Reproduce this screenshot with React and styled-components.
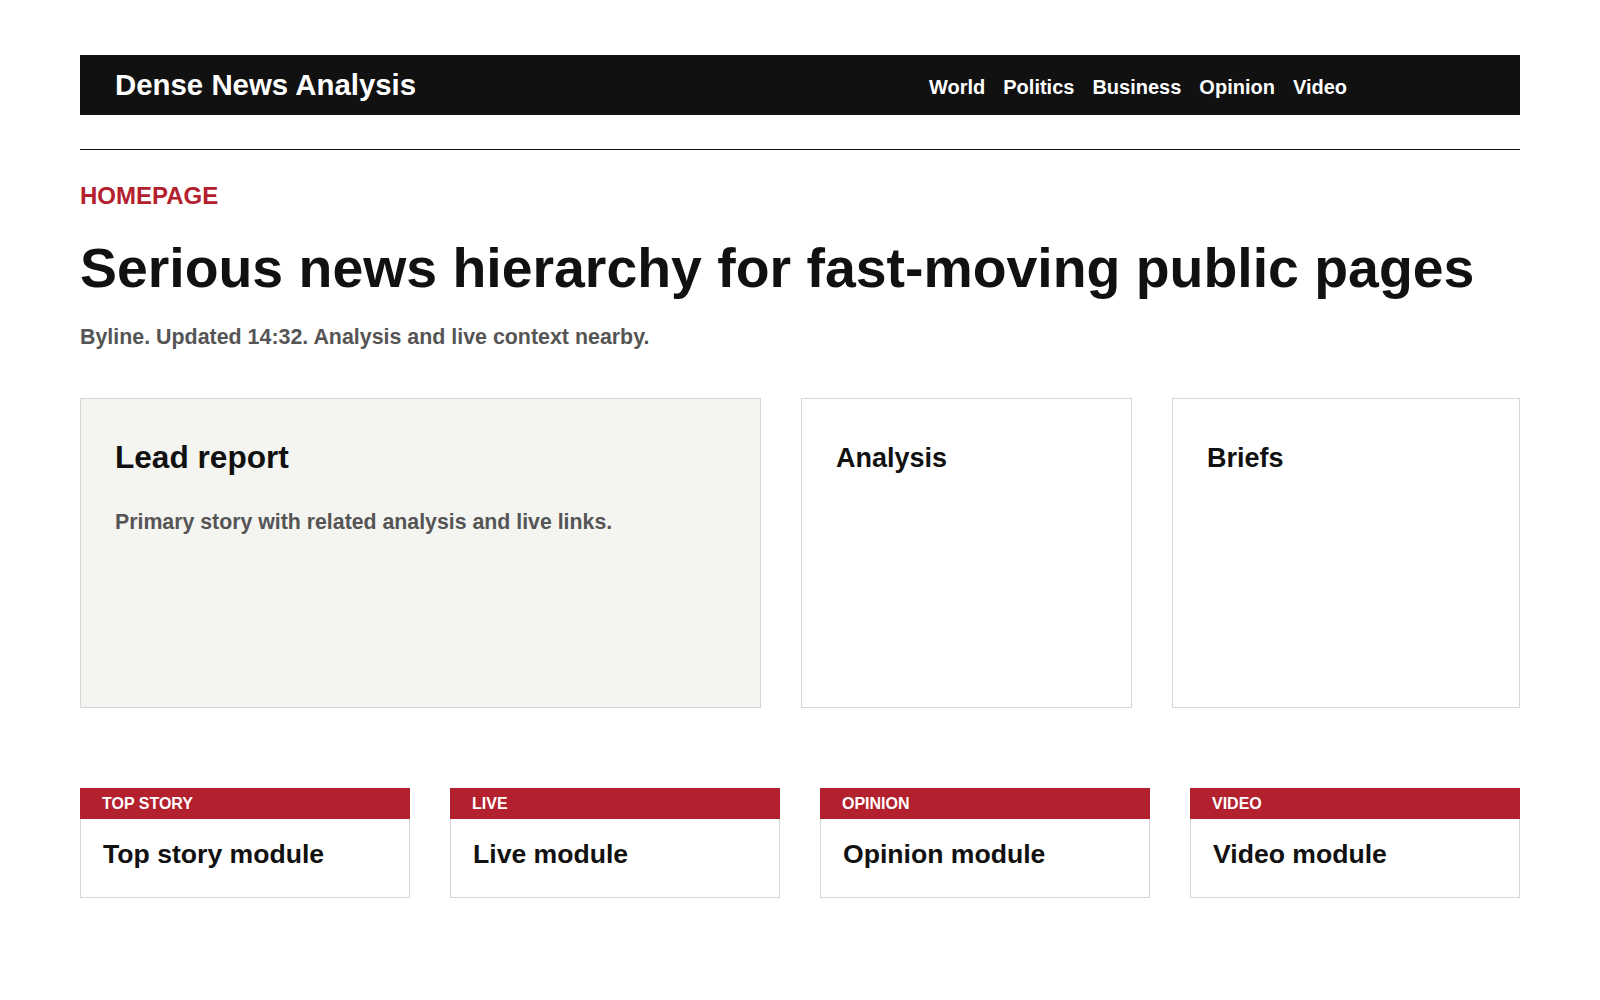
import React from "react";
import styled, { createGlobalStyle } from "styled-components";

const G = createGlobalStyle`
  body { margin: 0; background: #fff; font-family: "Liberation Sans", Arial, sans-serif; color: #111; }
  * { box-sizing: border-box; }
`;
const Page = styled.div`width: 1440px; margin: 0 auto; padding-top: 55px;`;
const Header = styled.header`
  height: 60px; background: #111; color: #fff; display: flex; align-items: center;
  justify-content: space-between; padding: 0 173px 0 35px;
`;
const Brand = styled.div`font-size: 29.4px; font-weight: 700;`;
const Nav = styled.nav`display: flex; gap: 18px; font-size: 20px; font-weight: 700; padding-top: 5px;`;
const Rule = styled.hr`border: 0; border-top: 1px solid #111; margin: 34px 0 0;`;
const Kicker = styled.div`color: #b3202e; font-size: 24px; font-weight: 700; margin-top: 32px;`;
const H1 = styled.h1`font-size: 55.4px; font-weight: 700; margin: 27px 0 0; line-height: 1.15; white-space: nowrap;`;
const Byline = styled.p`color: #555; font-size: 21.4px; font-weight: 700; margin: 24px 0 0;`;
const TopGrid = styled.div`display: grid; grid-template-columns: 681px 331px 1fr; gap: 40px; margin-top: 48px;`;
const Card = styled.section`
  height: 310px; border: 1px solid #d6d6d6; background: ${p => p.$lead ? "#f4f4f1" : "#fff"};
  padding: ${p => p.$lead ? "40px 34px" : "44px 34px"};
`;
const CardTitle = styled.h2`margin: 0; font-size: ${p => p.$lead ? "31.6px" : "27px"}; font-weight: 700;`;
const CardText = styled.p`margin: 34px 0 0; color: #555; font-size: 21.3px; font-weight: 700;`;
const Modules = styled.div`display: grid; grid-template-columns: repeat(4, 1fr); gap: 40px; margin-top: 80px;`;
const Module = styled.div`border: 1px solid #d6d6d6; border-top: 0; height: 110px;`;
const Label = styled.div`
  background: #b3202e; color: #fff; height: 31px; line-height: 31px; padding-left: 22px;
  font-size: 16px; font-weight: 700; margin: 0 -1px;
`;
const ModTitle = styled.h3`margin: 20px 0 0 22px; font-size: 26.6px; font-weight: 700;`;

export default function App() {
  return (
    <Page>
      <G />
      <Header>
        <Brand>Dense News Analysis</Brand>
        <Nav>{["World", "Politics", "Business", "Opinion", "Video"].map(n => <span key={n}>{n}</span>)}</Nav>
      </Header>
      <Rule />
      <Kicker>HOMEPAGE</Kicker>
      <H1>Serious news hierarchy for fast-moving public pages</H1>
      <Byline>Byline. Updated 14:32. Analysis and live context nearby.</Byline>
      <TopGrid>
        <Card $lead>
          <CardTitle $lead>Lead report</CardTitle>
          <CardText>Primary story with related analysis and live links.</CardText>
        </Card>
        <Card><CardTitle>Analysis</CardTitle></Card>
        <Card><CardTitle>Briefs</CardTitle></Card>
      </TopGrid>
      <Modules>
        {[["TOP STORY", "Top story module"], ["LIVE", "Live module"], ["OPINION", "Opinion module"], ["VIDEO", "Video module"]].map(([l, t]) => (
          <Module key={l}><Label>{l}</Label><ModTitle>{t}</ModTitle></Module>
        ))}
      </Modules>
    </Page>
  );
}
